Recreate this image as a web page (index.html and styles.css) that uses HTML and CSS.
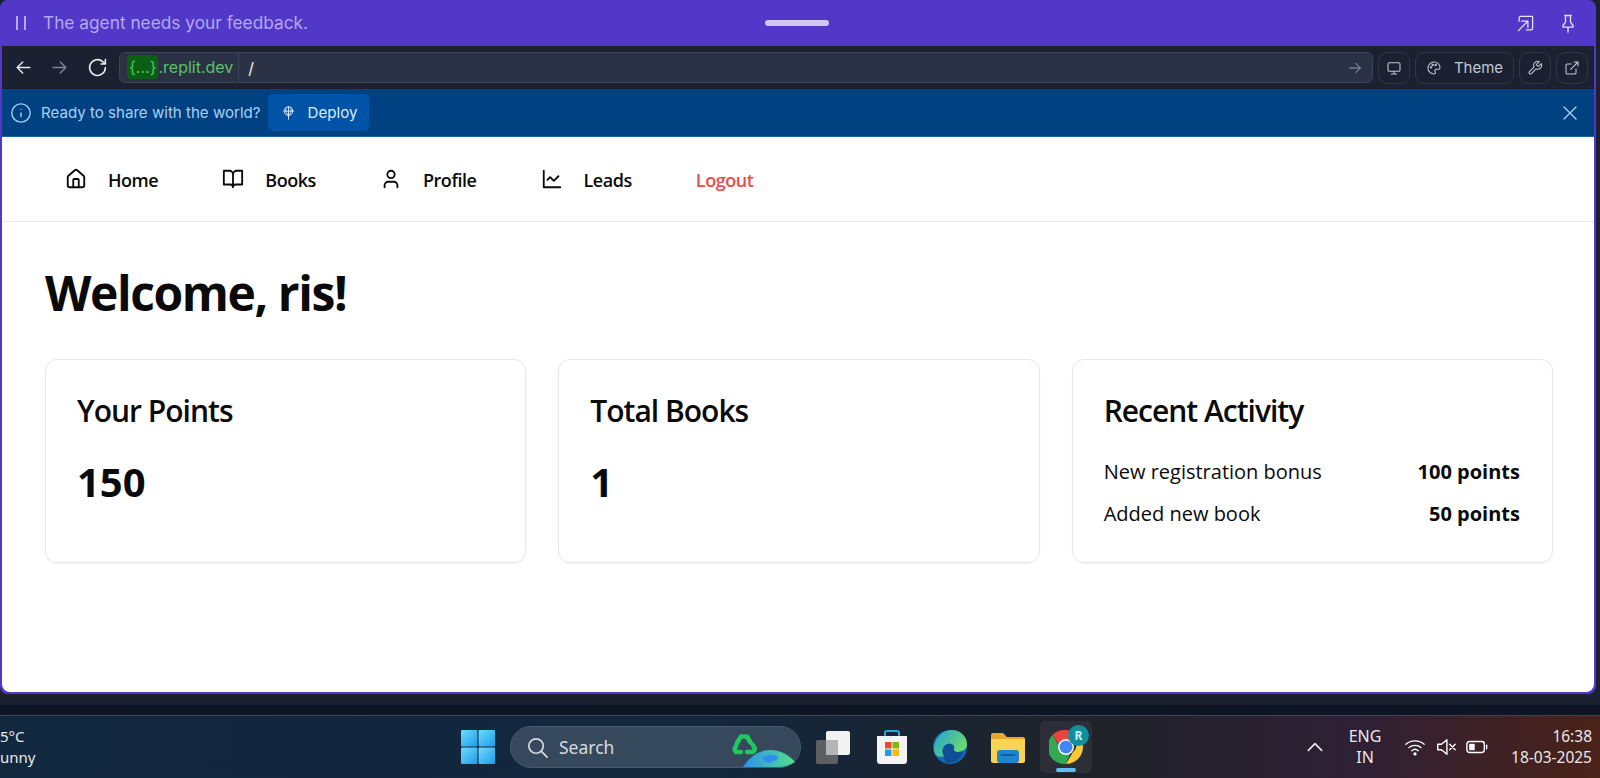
FILE: index.html
```html
<!DOCTYPE html>
<html lang="en">

<head>
    <meta charset="UTF-8">
    <title>Replit preview</title>
    <link rel="stylesheet" href="styles.css">
</head>

<body>
    <div class="window">
        <!-- Agent bar -->
        <div class="agent-bar">
            <span class="pause"><i></i><i></i></span>
            <span class="agent-text">The agent needs your feedback.</span>
            <span class="grabber"></span>
            <svg class="agent-icon" viewBox="0 0 24 24"><path d="M4 9V5a2 2 0 0 1 2-2h14a1 1 0 0 1 1 1v14a2 2 0 0 1-2 2h-6M3 21 15 9M7 9h8v8"/></svg>
            <svg class="agent-icon pin" viewBox="0 0 24 24"><path d="M12 17v6M8 3h8M9 3v8l-3 4v2h12v-2l-3-4V3"/></svg>
        </div>

        <!-- Preview toolbar -->
        <div class="toolbar">
            <svg class="tool-icon" viewBox="0 0 24 24"><path d="M20 12H4M11 5l-7 7 7 7"/></svg>
            <svg class="tool-icon dim" viewBox="0 0 24 24"><path d="M4 12h16M13 5l7 7-7 7"/></svg>
            <svg class="tool-icon reload" viewBox="0 0 24 24"><path d="M21 12a9 9 0 1 1-2.800-6.500L21 8M21 3v5h-5"/></svg>
            <div class="url-box">
                <span class="host"><span class="host-tag">{...}</span>.replit.dev</span>
                <span class="path">/</span>
                <svg class="url-go" viewBox="0 0 24 24"><path d="M4 12h16M13 5l7 7-7 7"/></svg>
            </div>
            <span class="tool-btn">
                <svg viewBox="0 0 24 24"><rect x="3" y="4" width="18" height="13" rx="2"/><path d="M8 21h8M12 17v4"/></svg>
            </span>
            <span class="tool-btn theme-btn">
                <svg viewBox="0 0 24 24"><path d="M12 3a9 9 0 0 0 0 18c1.500 0 2.200-1 2.200-2.200 0-1.500-1-1.800-1-3 0-1 .8-1.800 2-1.800h2.300C19.800 14 21 12.800 21 11c0-4.500-4-8-9-8Z"/><circle cx="7.500" cy="11" r="1"/><circle cx="10" cy="7.500" r="1"/><circle cx="14.500" cy="7.500" r="1"/></svg>
                Theme
            </span>
            <span class="tool-btn">
                <svg viewBox="0 0 24 24"><path d="M14.700 6.300a1 1 0 0 0 0 1.400l1.600 1.600a1 1 0 0 0 1.400 0l3.800-3.800a6 6 0 0 1-7.900 7.900l-6.900 6.900a2.100 2.100 0 0 1-3-3l6.900-6.900a6 6 0 0 1 7.900-7.900Z"/></svg>
            </span>
            <span class="tool-btn">
                <svg viewBox="0 0 24 24"><path d="M18 13v6a2 2 0 0 1-2 2H5a2 2 0 0 1-2-2V8a2 2 0 0 1 2-2h6M15 3h6v6M10 14 21 3"/></svg>
            </span>
        </div>

        <!-- Deploy banner -->
        <div class="banner">
            <svg class="banner-info" viewBox="0 0 24 24"><circle cx="12" cy="12" r="10"/><path d="M12 16v-4M12 8h.01"/></svg>
            <span class="banner-text">Ready to share with the world?</span>
            <span class="deploy-btn">
                <svg viewBox="0 0 24 24"><circle cx="12" cy="9" r="7"/><path d="M5 9h14M12 2v20M8.500 3c-1.500 4-1 8 3.500 13 4.500-5 5-9 3.500-13"/></svg>
                Deploy
            </span>
            <svg class="banner-close" viewBox="0 0 24 24"><path d="M4 4l16 16M20 4 4 20"/></svg>
        </div>

        <!-- App -->
        <div class="app">
            <nav class="nav">
                <a class="nav-link">
                    <svg viewBox="0 0 24 24"><path d="M3 10a2 2 0 0 1 .7-1.500l7-6a2 2 0 0 1 2.600 0l7 6A2 2 0 0 1 21 10v9a2 2 0 0 1-2 2H5a2 2 0 0 1-2-2Z"/><path d="M15 21v-8a1 1 0 0 0-1-1h-4a1 1 0 0 0-1 1v8"/></svg>
                    Home
                </a>
                <a class="nav-link">
                    <svg viewBox="0 0 24 24"><path d="M2 3h6a4 4 0 0 1 4 4v14a3 3 0 0 0-3-3H2ZM22 3h-6a4 4 0 0 0-4 4v14a3 3 0 0 1 3-3h7Z"/></svg>
                    Books
                </a>
                <a class="nav-link">
                    <svg viewBox="0 0 24 24"><path d="M19 21v-2a4 4 0 0 0-4-4H9a4 4 0 0 0-4 4v2"/><circle cx="12" cy="7" r="4"/></svg>
                    Profile
                </a>
                <a class="nav-link">
                    <svg viewBox="0 0 24 24"><path d="M3 3v18h18M19 9l-5 5-4-4-3 3"/></svg>
                    Leads
                </a>
                <a class="nav-link logout">Logout</a>
            </nav>

            <main class="content">
                <h1>Welcome, ris!</h1>
                <div class="cards">
                    <section class="card">
                        <h2>Your Points</h2>
                        <p class="big-number">150</p>
                    </section>
                    <section class="card">
                        <h2>Total Books</h2>
                        <p class="big-number">1</p>
                    </section>
                    <section class="card">
                        <h2>Recent Activity</h2>
                        <div class="activity-row"><span>New registration bonus</span><b>100 points</b></div>
                        <div class="activity-row"><span>Added new book</span><b>50 points</b></div>
                    </section>
                </div>
            </main>
        </div>
    </div>

    <div class="strip"></div>

    <!-- Windows taskbar -->
    <footer class="taskbar">
        <div class="weather">5°C<br>unny</div>

        <div class="task-center">
            <svg class="task-icon" viewBox="0 0 32 32">
                <defs>
                    <linearGradient id="winBlue" x1="0" y1="0" x2="1" y2="1">
                        <stop offset="0" stop-color="#6fdcff"/>
                        <stop offset="1" stop-color="#1d9be8"/>
                    </linearGradient>
                    <linearGradient id="earth" x1="0" y1="0" x2="1" y2="0">
                        <stop offset="0" stop-color="#2f8ff0"/>
                        <stop offset="1" stop-color="#4fe08c"/>
                    </linearGradient>
                    <linearGradient id="edgeTop" x1="0" y1="0" x2="1" y2="0.600">
                        <stop offset="0" stop-color="#1f9fd8"/>
                        <stop offset="1" stop-color="#6fdc6a"/>
                    </linearGradient>
                </defs>
                <rect x="0" y="0" width="15.500" height="15.500" rx="1" fill="url(#winBlue)"/>
                <rect x="16.500" y="0" width="15.500" height="15.500" rx="1" fill="url(#winBlue)"/>
                <rect x="0" y="16.500" width="15.500" height="15.500" rx="1" fill="url(#winBlue)"/>
                <rect x="16.500" y="16.500" width="15.500" height="15.500" rx="1" fill="url(#winBlue)"/>
            </svg>

            <div class="search-pill">
                <svg class="search-icon" viewBox="0 0 24 24"><circle cx="10.500" cy="10.500" r="7.500"/><path d="m16 16 6 6"/></svg>
                <span>Search</span>
                <svg class="search-art" viewBox="0 0 70 40">
                    <path class="recycle" d="M7 16 11 9.500h6l3.500 6M23 18l2 4-2 3h-6M11 25H6l-1.500-3 2-4"/>
                    <path d="M13 40C20 29 30 23 40 23c11 0 19 5 25 12-5 3-11 5-18 5Z" fill="url(#earth)"/>
                    <path d="M32 31c5-4 11-4 15-2 2 2 0 5-4 5-3 3-8 2-11-3Z" fill="#2f8ff0"/>
                </svg>
            </div>

            <svg class="task-icon view-icon" viewBox="0 0 34 34">
                <rect x="0" y="10" width="22" height="24" rx="2" fill="#5d5f63"/>
                <rect x="10" y="1" width="24" height="24" rx="2" fill="#f2f2f2"/>
                <rect x="10" y="10" width="12" height="15" fill="#b4b5b7"/>
            </svg>

            <svg class="task-icon" viewBox="0 0 34 34">
                <path d="M10 7V3a2 2 0 0 1 2-2h10a2 2 0 0 1 2 2v4" fill="none" stroke="#2aa4e0" stroke-width="2"/>
                <path d="M2 6h30v25a3 3 0 0 1-3 3H5a3 3 0 0 1-3-3Z" fill="#f4f4f4"/>
                <rect x="10" y="12" width="6.500" height="6.500" fill="#ea4e26"/>
                <rect x="17.500" y="12" width="6.500" height="6.500" fill="#7fba00"/>
                <rect x="10" y="19.500" width="6.500" height="6.500" fill="#1c9ee8"/>
                <rect x="17.500" y="19.500" width="6.500" height="6.500" fill="#fcb900"/>
            </svg>

            <svg class="task-icon" viewBox="0 0 34 34">
                <circle cx="17" cy="17" r="17" fill="#1468b8"/>
                <path d="M1 21C0 9 9 0 19 0c9 0 15 7 15 14 0 5-4 8-9 8-3 0-5-1-4-3 1-3-2-6-6-5-5 1-7 7-4 12C7 28 2 26 1 21Z" fill="url(#edgeTop)"/>
                <path d="M11 26c-3-5-1-11 4-12 4-1 7 2 6 5-1 2 1 3 4 3 3 0 5-1 6-2-2 8-9 14-17 13-2-2-3-4-3-7Z" fill="#0d4e94"/>
            </svg>

            <svg class="task-icon" viewBox="0 0 34 34">
                <path d="M0 5a2 2 0 0 1 2-2h10l4 4h16a2 2 0 0 1 2 2v6H0Z" fill="#e6a92c"/>
                <path d="M0 9h34v22a2 2 0 0 1-2 2H2a2 2 0 0 1-2-2Z" fill="#fbd354"/>
                <rect x="6" y="20" width="22" height="13" rx="3" fill="#1f86cc"/>
                <rect x="10" y="24" width="14" height="2" fill="#0e5fa3"/>
            </svg>

            <div class="chrome-slot">
                <svg class="task-icon" viewBox="0 0 34 34">
                    <path d="M17 0a17 17 0 0 1 15 9H17a8 8 0 0 0-7.500 5L3.500 5A17 17 0 0 1 17 0Z" fill="#e8443a"/>
                    <path d="M32 9a17 17 0 0 1-15 25l7-12a8 8 0 0 0 0-13Z" fill="#fcc934"/>
                    <path d="M3.500 5 10 16a8 8 0 0 0 11 8l-4 10A17 17 0 0 1 3.500 5Z" fill="#34a853"/>
                    <circle cx="17" cy="17" r="8" fill="#fff"/>
                    <circle cx="17" cy="17" r="6.500" fill="#4285f4"/>
                </svg>
                <span class="chrome-badge">R</span>
                <span class="chrome-dash"></span>
            </div>
        </div>

        <div class="tray">
            <svg class="chevron" viewBox="0 0 24 24"><path d="M4 16l8-8 8 8"/></svg>
            <div class="lang">ENG<br>IN</div>
            <svg class="tray-icon" viewBox="0 0 24 24"><path d="M2 9c5.500-5 14.500-5 20 0M5.500 12.500c3.500-3 9.500-3 13 0M8.500 16c2-1.700 5-1.700 7 0"/><circle cx="12" cy="19.500" r="1" fill="#fff"/></svg>
            <svg class="tray-icon" viewBox="0 0 24 24"><path d="M3 9v6h4l6 5V4L7 9ZM16 9l6 6M22 9l-6 6"/></svg>
            <svg class="tray-icon" viewBox="0 0 24 24"><rect x="1" y="6" width="19" height="12" rx="3"/><rect x="3.500" y="8.500" width="6" height="7" fill="#fff" stroke="none"/><path d="M22.500 10v4"/></svg>
            <div class="clock">16:38<br>18-03-2025</div>
        </div>
    </footer>
</body>

</html>
```

FILE: styles.css
```css
/* General Styles */
* {
    margin: 0;
    padding: 0;
    box-sizing: border-box;
}

body {
    display: flex;
    flex-direction: column;
    height: 100vh;
    overflow: hidden;
    background: #1b2130;
    font-family: "Open Sans", "Noto Sans", sans-serif;
}

svg {
    fill: none;
    stroke: currentColor;
    stroke-width: 2;
    stroke-linecap: round;
    stroke-linejoin: round;
    flex-shrink: 0;
}

/* Window */
.window {
    display: flex;
    flex-direction: column;
    width: 1596px;
    height: 694px;
    flex-shrink: 0;
    background: #5138c9;
    border: 2px solid #5138c9;
    border-top: none;
    border-radius: 8px;
    font-family: Inter, "Noto Sans", sans-serif;
}

.agent-bar {
    display: flex;
    align-items: center;
    height: 46px;
    padding: 0 16px 0 14px;
    color: #b4a9ec;
}

.pause {
    display: flex;
    gap: 6px;
    margin-right: 17px;
}

.pause i {
    width: 2px;
    height: 14px;
    background: #b4a9ec;
}

.agent-text {
    width: 725px;
    font-size: 17.300px;
    padding-bottom: 1px;
}

.grabber {
    width: 64px;
    height: 6px;
    border-radius: 3px;
    background: #cfc8f3;
    margin-right: 687px;
}

.agent-icon {
    width: 19px;
    height: 19px;
    color: #e6e1fb;
    stroke-width: 1.600;
}

.pin {
    margin-left: 23px;
    width: 20px;
    height: 22px;
}

/* Toolbar */
.toolbar {
    display: flex;
    align-items: center;
    height: 43px;
    padding: 0 6px 0 12px;
    background: #1b2130;
    color: #e8eaf0;
}

.tool-icon {
    width: 19px;
    height: 19px;
    margin-right: 17px;
    stroke-width: 1.800;
}

.tool-icon.dim {
    color: #7f8694;
}

.tool-icon.reload {
    width: 21px;
    height: 21px;
    margin-right: 11px;
    margin-left: 1px;
}

.url-box {
    display: flex;
    align-items: center;
    flex: 1;
    height: 31px;
    padding-left: 7px;
    padding-right: 9px;
    background: #2b3245;
    border: 1px solid #3c445c;
    border-radius: 6px;
}

.host {
    padding-right: 5px;
    border-right: 1px solid #3c445c;
    height: 29px;
    line-height: 29px;
    color: #58c264;
    font-size: 16px;
}

.host-tag {
    display: inline-block;
    height: 24px;
    line-height: 24px;
    padding: 0 2px;
    background: #0b5f14;
    border-radius: 4px;
}

.path {
    flex: 1;
    padding-left: 9px;
    color: #f0f1f5;
    font-size: 16px;
}

.url-go {
    width: 16px;
    height: 16px;
    color: #9aa0ad;
    stroke-width: 1.500;
}

.tool-btn {
    display: flex;
    align-items: center;
    justify-content: center;
    gap: 12px;
    width: 32px;
    height: 32px;
    margin-left: 5px;
    border: 1px solid #2f3649;
    border-radius: 9px;
    color: #c2c8d4;
    font-size: 15px;
}

.tool-btn svg {
    width: 16px;
    height: 16px;
    stroke-width: 1.600;
}

.theme-btn {
    width: 99px;
}

/* Deploy banner */
.banner {
    display: flex;
    align-items: center;
    height: 48px;
    padding: 0 15px 0 8px;
    background: #004182;
    border-bottom: 1px solid #1a619f;
    color: #a6d1f5;
    font-size: 15.100px;
}

.banner-info {
    width: 22px;
    height: 22px;
    margin-right: 9px;
    stroke-width: 1.500;
}

.banner-text {
    margin-right: 7px;
}

.deploy-btn {
    display: flex;
    align-items: center;
    gap: 12px;
    height: 37px;
    padding: 0 12px 0 13px;
    background: #0053a6;
    border-radius: 5px;
    color: #dcedfb;
}

.deploy-btn svg {
    width: 15px;
    height: 16px;
    stroke-width: 1.500;
}

.banner-close {
    width: 18px;
    height: 18px;
    margin-left: auto;
    stroke-width: 1.800;
}

/* App */
.app {
    flex: 1;
    background: #fff;
    border-radius: 0 0 8px 8px;
    color: #0a0a0a;
    font-family: "Open Sans", "Noto Sans", sans-serif;
}

.nav {
    display: flex;
    align-items: center;
    gap: 64px;
    height: 85px;
    padding: 2px 0 0 63px;
    border-bottom: 1px solid #e5e7eb;
}

.nav-link {
    display: flex;
    align-items: center;
    gap: 21px;
    font-size: 18px;
    font-weight: 600;
    color: #0a0a0a;
    letter-spacing: -0.450px;
}

.nav-link svg {
    width: 22px;
    height: 22px;
    margin-top: -3px;
}

.logout {
    color: #ea4c4c;
}

.content {
    padding: 36px 41px 0 43px;
}

h1 {
    font-size: 48px;
    line-height: 70px;
    font-weight: 700;
    letter-spacing: -1.400px;
    margin-bottom: 31px;
}

.cards {
    display: grid;
    grid-template-columns: repeat(3, 1fr);
    gap: 32px;
}

.card {
    height: 204px;
    padding: 33px 32px 32px 31px;
    border: 1px solid #e5e7eb;
    border-radius: 12px;
    box-shadow: 0 1px 2px rgba(0, 0, 0, 0.05);
}

.card h2 {
    font-size: 30px;
    line-height: 36px;
    font-weight: 600;
    letter-spacing: -1px;
    margin-bottom: 29px;
}

.big-number {
    font-size: 40px;
    line-height: 48px;
    font-weight: 700;
}

.activity-row {
    display: flex;
    justify-content: space-between;
    font-size: 20px;
    line-height: 28px;
    margin-bottom: 14px;
}

.activity-row:first-of-type {
    margin-top: 6px;
}

/* Taskbar */
.strip {
    height: 22px;
    flex-shrink: 0;
    background: linear-gradient(#1b2130 50%, #0e1626 50%);
    border-bottom: 1px solid #3a4252;
}

.taskbar {
    position: relative;
    display: flex;
    align-items: center;
    flex: 1;
    background: linear-gradient(90deg, #12283f 0%, #13273d 45%, #1f2329 68%, #2f2035 85%, #4a2218 100%);
    color: #e8e8ea;
    font-family: "Noto Sans", sans-serif;
    font-size: 15px;
}

.weather {
    width: 461px;
    line-height: 21px;
}

.task-center {
    display: flex;
    align-items: center;
}

.task-icon {
    width: 34px;
    height: 34px;
    stroke: none;
}

.search-pill {
    display: flex;
    align-items: center;
    gap: 10px;
    position: relative;
    width: 291px;
    height: 42px;
    margin: 0 15px 0 15px;
    padding-left: 15px;
    background: #35485c;
    border: 1px solid #47596c;
    border-radius: 21px;
    font-size: 17.500px;
    color: #d5dae0;
}

.search-icon {
    width: 23px;
    height: 23px;
    stroke-width: 1.800;
}

.search-art {
    position: absolute;
    right: 0;
    bottom: 0;
    width: 70px;
    height: 40px;
    stroke: none;
}

.recycle {
    fill: none;
    stroke: #1fc95f;
    stroke-width: 4.500;
}

.view-icon {
    margin-right: 25px;
}

.task-center > svg + svg {
    margin-right: 24px;
}

.chrome-slot {
    position: relative;
    display: flex;
    align-items: center;
    justify-content: center;
    width: 52px;
    height: 52px;
    margin-left: -9px;
    background: #2c2f38;
    border-radius: 5px;
}

.chrome-badge {
    position: absolute;
    top: 4px;
    right: 3px;
    width: 21px;
    height: 21px;
    border-radius: 50%;
    background: #10909c;
    color: #cdeff5;
    font-size: 12px;
    font-weight: 700;
    line-height: 21px;
    text-align: center;
}

.chrome-dash {
    position: absolute;
    bottom: 1px;
    left: 16px;
    width: 20px;
    height: 4px;
    border-radius: 2px;
    background: #5cc1f2;
}

.tray {
    display: flex;
    align-items: center;
    margin-left: auto;
    padding-right: 8px;
}

.chevron {
    width: 20px;
    height: 20px;
    margin-right: 15px;
}

.lang {
    width: 50px;
    font-size: 16px;
    line-height: 21px;
    text-align: center;
    margin-right: 14px;
}

.tray-icon {
    width: 22px;
    height: 22px;
    margin-right: 9px;
    color: #fff;
    stroke-width: 1.500;
}

.clock {
    margin-left: 14px;
    font-size: 15.500px;
    line-height: 21px;
    text-align: right;
}
```
